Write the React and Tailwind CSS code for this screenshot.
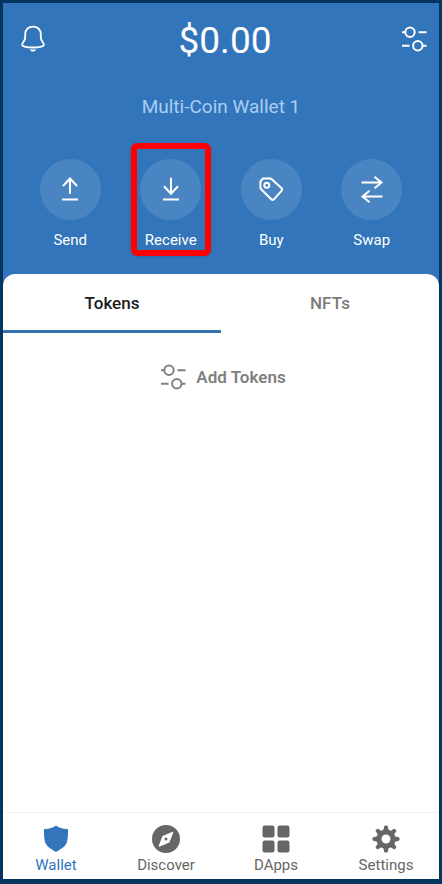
// React
import React, { useState } from 'react';

// ===== ICONS =====
const BellIcon = () => (
  <svg width="24" height="28" viewBox="0 0 24 28" fill="none" stroke="currentColor" strokeWidth="1.8" strokeLinejoin="round">
    <path d="M12 1.600c-4.700 0-7.800 3.200-7.800 7.600v2.900c0 1.900-.5 3.100-1.500 4.400C1.700 17.800 1 18.900 1.100 19.900c.2 1.500 4.900 2.600 10.900 2.600s10.700-1.100 10.900-2.600c.1-1-.6-2.100-1.600-3.400-1-1.300-1.500-2.500-1.500-4.400V9.200c0-4.400-3.100-7.600-7.800-7.600z" />
    <path d="M9 24.600h6c-.3 1.400-1.500 2-3 2s-2.700-.6-3-2z" fill="currentColor" stroke="none" />
  </svg>
);

const SlidersIcon = () => (
  <svg width="26" height="26" viewBox="0 0 26 26" fill="none" stroke="currentColor" strokeWidth="2">
    <circle cx="9" cy="6.200" r="4.700" />
    <path d="M1 6.200h3.300M17.500 6.200H25.500" />
    <circle cx="16.800" cy="19.800" r="4.700" />
    <path d="M1 19.800h7.500M21.500 19.800H25.500" />
  </svg>
);

const SendIcon = () => (
  <svg width="24" height="28" viewBox="0 1 24 28" fill="none" stroke="currentColor" strokeWidth="2">
    <path d="M12 18.800V3.500M5 11l7-7.500 7 7.500M4 24.500h16" />
  </svg>
);

const ReceiveIcon = () => (
  <svg width="24" height="28" viewBox="0 1 24 28" fill="none" stroke="currentColor" strokeWidth="2">
    <path d="M12 2.800v15.800M5 11.300l7 7.500 7-7.500M4 24.500h16" />
  </svg>
);

const TagIcon = () => (
  <svg width="26" height="26" viewBox="0 1 26 26" fill="none" stroke="currentColor" strokeWidth="2" strokeLinejoin="round">
    <path d="M5 2.500h6.800c.8 0 1.500.3 2 .8l9.600 8.800c.8.800.9 1.900.1 2.700l-7.600 8.500c-.8.800-1.900.8-2.700 0L3.200 13.300c-.5-.5-.8-1.200-.8-2V5.500z" />
    <circle cx="8.800" cy="9.200" r="2.500" />
  </svg>
);

const SwapIcon = () => (
  <svg width="26" height="28" viewBox="0 0 26 28" fill="none" stroke="currentColor" strokeWidth="2">
    <path d="M2.500 6.500H22.500M15.500 .8l7 5.700-7 5.700M23.500 20.500H3.500M10.500 14.800l-7 5.700 7 5.700" />
  </svg>
);

const ShieldIcon = () => (
  <svg width="28" height="28" viewBox="0 0 28 28" fill="currentColor">
    <path d="M14 .5c3 2.200 6.500 3.400 10.800 3.500.8 0 1.300.5 1.300 1.300-.1 5-.2 9.400-1.600 13-1.600 3.700-5.400 5.500-9.500 8.200-.7.400-1.300.4-2 0-4.100-2.700-7.900-4.500-9.500-8.200C2.100 14.700 2 10.300 1.900 5.300c0-.8.500-1.300 1.300-1.300C7.500 3.900 11 2.700 14 .5z" />
  </svg>
);

const CompassIcon = () => (
  <svg width="28" height="28" viewBox="0 0 28 28" fill="currentColor">
    <path fillRule="evenodd" d="M14 0a14 14 0 1 0 0 28 14 14 0 0 0 0-28zM21 6.900c.3.100.4.500.2.900l-3.800 9.600-9.600 4c-.9.400-1.400-.1-1-1l3.700-9.500 9.500-4c.4-.2.800-.2 1 0zM14 12.500a1.500 1.500 0 1 0 0 3 1.500 1.500 0 0 0 0-3z" />
  </svg>
);

const GridIcon = () => (
  <svg width="28" height="28" viewBox="0 0 28 28" fill="currentColor">
    <rect x=".5" y=".5" width="12" height="12" rx="2.200" />
    <rect x="15.500" y=".5" width="12" height="12" rx="2.200" />
    <rect x=".5" y="15.500" width="12" height="12" rx="2.200" />
    <rect x="15.500" y="15.500" width="12" height="12" rx="2.200" />
  </svg>
);

const GEAR_ANGLES = [0, 45, 90, 135, 180, 225, 270, 315];

const GearIcon = () => (
  <svg width="28" height="28" viewBox="0 0 28 28" fill="currentColor">
    <circle cx="14" cy="14" r="7" fill="none" stroke="currentColor" strokeWidth="5" />
    {GEAR_ANGLES.map((angle) => (
      <path
        key={angle}
        d="M10.300 5.800c1.300-.8 1.500-1.700 1.700-3.700.1-1.100.7-1.700 2-1.700s1.900.6 2 1.700c.2 2 .4 2.900 1.700 3.700z"
        transform={`rotate(${angle} 14 14)`}
      />
    ))}
  </svg>
);

// ===== DATA =====
const actions = [
  { label: 'Send', icon: SendIcon },
  { label: 'Receive', icon: ReceiveIcon, highlighted: true },
  { label: 'Buy', icon: TagIcon },
  { label: 'Swap', icon: SwapIcon },
];

const tabs = ['Tokens', 'NFTs'];

const navItems = [
  { label: 'Wallet', icon: ShieldIcon },
  { label: 'Discover', icon: CompassIcon },
  { label: 'DApps', icon: GridIcon },
  { label: 'Settings', icon: GearIcon },
];

// Round action button with its label below
const ActionButton = ({ label, icon: Icon, highlighted }) => (
  <button type="button" className="relative flex flex-col items-center gap-2.5 text-white">
    <span className="flex size-[61px] items-center justify-center rounded-full bg-white/12">
      <Icon />
    </span>
    <span className="text-[15px] leading-5">{label}</span>
    {highlighted && (
      <span className="absolute -top-4 -bottom-1.5 inset-x-2.5 rounded-md border-6 border-[#fe0000] shadow-sm" />
    )}
  </button>
);

const App = () => {
  const [activeTab, setActiveTab] = useState('Tokens');
  const [activeNav, setActiveNav] = useState('Wallet');

  return (
    <div className="flex min-h-screen flex-col border-3 border-b-5 border-[#03355f] bg-[#3275bb] font-[Roboto,sans-serif]">
      {/* ===== HEADER ===== */}
      <header className="pb-6">
        <div className="flex items-center justify-between pt-2.5 pr-3 pl-[18px] text-white">
          <button type="button" aria-label="Notifications">
            <BellIcon />
          </button>
          <h1 className="pt-1 pl-1 text-[37px] leading-[48px]">$0.00</h1>
          <button type="button" aria-label="Manage tokens">
            <SlidersIcon />
          </button>
        </div>
        <p className="mt-[30px] text-center text-[19px] leading-6 text-[#a9cdf2]">Multi-Coin Wallet 1</p>
        <div className="mt-10 grid grid-cols-4 px-[17px]">
          {actions.map((action) => (
            <ActionButton key={action.label} {...action} />
          ))}
        </div>
      </header>

      {/* ===== TOKEN LIST ===== */}
      <main className="flex flex-1 flex-col rounded-t-xl bg-white">
        <div role="tablist" className="grid grid-cols-2">
          {tabs.map((tab) => (
            <button
              key={tab}
              type="button"
              role="tab"
              aria-selected={activeTab === tab}
              onClick={() => setActiveTab(tab)}
              className={`h-[59px] border-b-3 pt-1 text-[17px] font-medium ${
                activeTab === tab ? 'border-[#3573b1] text-[#1b1b1b]' : 'border-transparent text-[#7b7b7b]'
              }`}
            >
              {tab}
            </button>
          ))}
        </div>
        <button type="button" className="mt-[31px] ml-1 flex items-center gap-2.5 self-center text-[#808080]">
          <SlidersIcon />
          <span className="text-[17px] leading-6 font-semibold">Add Tokens</span>
        </button>
      </main>

      {/* ===== BOTTOM NAVIGATION ===== */}
      <div className="border-t border-[#f3f3f3] bg-white">
        <nav className="-mx-0.5 grid grid-cols-4 pt-3 pb-1">
          {navItems.map(({ label, icon: Icon }) => (
            <button
              key={label}
              type="button"
              onClick={() => setActiveNav(label)}
              className={`flex flex-col items-center gap-0.5 ${activeNav === label ? 'text-[#3275bb]' : 'text-[#666666]'}`}
            >
              <Icon />
              <span className="text-[15px] leading-5">{label}</span>
            </button>
          ))}
        </nav>
      </div>
    </div>
  );
};

export default App;
